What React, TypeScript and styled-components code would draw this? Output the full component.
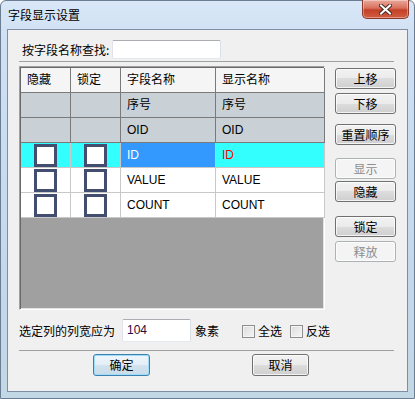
import React from "react";
import styled, { createGlobalStyle } from "styled-components";

const GlobalStyle = createGlobalStyle`
  html, body {
    margin: 0;
    padding: 0;
    background: #ffffff;
  }
  body {
    font-family: "Liberation Sans", "Noto Sans CJK SC", sans-serif;
    font-size: 12px;
    color: #000;
  }
`;

const Window = styled.div`
  width: 415px;
  height: 399px;
  box-sizing: border-box;
  display: flex;
  flex-direction: column;
  border: 1px solid #6a7d92;
  border-radius: 6px 6px 0 0;
  background: linear-gradient(to bottom, #d9e7f7 0%, #cfe0f3 40px, #c4d7ec 70%, #c2d8e4 100%);
`;

const TitleBar = styled.div`
  height: 28px;
  display: flex;
  align-items: flex-start;
  padding-left: 7px;
`;

const TitleText = styled.span`
  margin-top: 7px;
  font-family: "Noto Sans CJK SC", sans-serif;
  font-size: 12px;
  line-height: 14px;
`;

const CloseButton = styled.div`
  margin-left: auto;
  margin-right: 5px;
  margin-top: -1px;
  width: 47px;
  height: 19px;
  box-sizing: border-box;
  display: flex;
  align-items: center;
  justify-content: center;
  border: 1px solid #8a3a2c;
  border-top: none;
  border-radius: 0 0 5px 5px;
  background: linear-gradient(to bottom, #e9a99b 0%, #d9705c 45%, #c3402a 55%, #d25e40 100%);
  box-shadow: inset 0 0 0 1px rgba(255, 255, 255, 0.35);
`;

const Client = styled.div`
  flex: 1;
  margin: 0 6px 6px 6px;
  border: 1px solid #7f8fa3;
  background: #f0f0f0;
  padding: 10px 13px 0 11px;
  display: flex;
  flex-direction: column;
`;

const SearchRow = styled.div`
  height: 19px;
  display: flex;
  align-items: center;
  padding-left: 3px;
`;

const Label = styled.span<{ $gap?: number }>`
  margin-left: ${(p) => p.$gap ?? 0}px;
  font-family: "Noto Sans CJK SC", sans-serif;
  font-size: 12px;
  line-height: 14px;
  white-space: nowrap;
`;

const TextBox = styled.div<{ $w: number; $h: number; $gap: number }>`
  width: ${(p) => p.$w}px;
  height: ${(p) => p.$h}px;
  margin-left: ${(p) => p.$gap}px;
  box-sizing: border-box;
  border: 1px solid;
  border-color: #abadb3 #dbdfe6 #e3e9ef #e2e3ea;
  border-radius: 2px;
  background: #ffffff;
  padding: 3px 0 0 4px;
  font-family: "Liberation Sans", sans-serif;
  font-size: 12px;
  line-height: 14px;
  color: #2a0a40;
`;

const Separator = styled.div<{ $top: number }>`
  height: 1px;
  margin-top: ${(p) => p.$top}px;
  background: #a0a0a0;
`;

const MainRow = styled.div`
  margin-top: 4px;
  display: flex;
  align-items: flex-start;
`;

const Grid = styled.div`
  width: 306px;
  height: 244px;
  box-sizing: border-box;
  border: 1px solid;
  border-color: #a0a0a0 #ffffff #ffffff #a0a0a0;
  box-shadow: inset 1px 1px 0 #696969, inset -1px -1px 0 #e3e3e3;
  padding: 1px;
  background: #a0a0a0;
  display: grid;
  grid-template-columns: 50px 50px 95px 109px;
  grid-auto-rows: 25px;
  align-content: start;
`;

const Cell = styled.div<{ $bg: string; $line: string; $color?: string }>`
  box-sizing: border-box;
  background: ${(p) => p.$bg};
  border-right: 1px solid ${(p) => p.$line};
  border-bottom: 1px solid ${(p) => p.$line};
  padding-left: 6px;
  display: flex;
  align-items: center;
  color: ${(p) => p.$color ?? "#000"};
  font-family: "Liberation Sans", "Noto Sans CJK SC", sans-serif;
  font-size: 12px;
  line-height: 14px;
  white-space: nowrap;
  overflow: hidden;
`;

const CheckCell = styled(Cell)`
  padding-left: 0;
  justify-content: center;
`;

const CheckGlyph = styled.span`
  width: 23px;
  height: 23px;
  box-sizing: border-box;
  border: 3px solid #434d6f;
  background: #ffffff;
`;

const ButtonColumn = styled.div`
  margin-left: 10px;
  padding-top: 2px;
  display: flex;
  flex-direction: column;
`;

const Button = styled.button<{ $top?: number; $w?: number; $focused?: boolean }>`
  width: ${(p) => p.$w ?? 61}px;
  height: ${(p) => (p.$w ? 22 : 21)}px;
  margin-top: ${(p) => p.$top ?? 0}px;
  padding: 0;
  box-sizing: border-box;
  border: 1px solid ${(p) => (p.disabled ? "#adb2b5" : p.$focused ? "#3c7fb1" : "#707070")};
  border-radius: 3px;
  background: ${(p) =>
    p.disabled
      ? "#f4f4f4"
      : p.$focused
      ? "linear-gradient(to bottom, #eef6fb 0%, #e3eef6 50%, #d3e3ef 50%, #c8dbe9 100%)"
      : "linear-gradient(to bottom, #f2f2f2 0%, #ebebeb 50%, #dddddd 50%, #cfcfcf 100%)"};
  box-shadow: inset 0 0 0 1px ${(p) => (p.$focused ? "#9fdcf7" : "rgba(255, 255, 255, 0.75)")};
  color: ${(p) => (p.disabled ? "#8d8d8d" : "#000")};
  font-family: "Noto Sans CJK SC", sans-serif;
  font-size: 12px;
  line-height: 14px;
`;

const BottomRow = styled.div`
  margin-top: 9px;
  height: 23px;
  display: flex;
  align-items: center;
`;

const CheckBox = styled.span<{ $gap: number }>`
  width: 13px;
  height: 13px;
  margin-left: ${(p) => p.$gap}px;
  box-sizing: border-box;
  border: 1px solid #8e8f8f;
  background: linear-gradient(135deg, #dcdcdc 0%, #f5f5f5 100%);
  box-shadow: inset 0 0 0 1px #f4f4f4;
  margin-top: 1px;
`;

const ActionRow = styled.div`
  margin-top: 3px;
  padding-left: 74px;
  display: flex;
  gap: 102px;
`;

type Row = {
  kind: "head" | "fixed" | "data";
  name: string;
  display: string;
  selected?: boolean;
};

const rows: Row[] = [
  { kind: "head", name: "字段名称", display: "显示名称" },
  { kind: "fixed", name: "序号", display: "序号" },
  { kind: "fixed", name: "OID", display: "OID" },
  { kind: "data", name: "ID", display: "ID", selected: true },
  { kind: "data", name: "VALUE", display: "VALUE" },
  { kind: "data", name: "COUNT", display: "COUNT" },
];

const CloseIcon = () => (
  <svg width="13" height="11" viewBox="0 0 13 11">
    <path d="M2 1.5 L11 9.5 M11 1.5 L2 9.5" stroke="#4a2a24" strokeWidth="4" strokeLinecap="square" fill="none" />
    <path d="M2 1.5 L11 9.5 M11 1.5 L2 9.5" stroke="#ffffff" strokeWidth="2" strokeLinecap="square" fill="none" />
  </svg>
);

function FieldGrid() {
  return (
    <Grid>
      {rows.map((row, i) => {
        if (row.kind === "head") {
          return (
            <React.Fragment key={i}>
              <Cell $bg="#f5f5f5" $line="#7a7a7a">隐藏</Cell>
              <Cell $bg="#f5f5f5" $line="#7a7a7a">锁定</Cell>
              <Cell $bg="#f5f5f5" $line="#7a7a7a">{row.name}</Cell>
              <Cell $bg="#f5f5f5" $line="#7a7a7a">{row.display}</Cell>
            </React.Fragment>
          );
        }
        if (row.kind === "fixed") {
          return (
            <React.Fragment key={i}>
              <Cell $bg="#c9d0d6" $line="#7a7a7a" />
              <Cell $bg="#c9d0d6" $line="#7a7a7a" />
              <Cell $bg="#c9d0d6" $line="#7a7a7a">{row.name}</Cell>
              <Cell $bg="#c9d0d6" $line="#7a7a7a">{row.display}</Cell>
            </React.Fragment>
          );
        }
        const bg = row.selected ? "#33ffff" : "#ffffff";
        return (
          <React.Fragment key={i}>
            <CheckCell $bg={bg} $line="#c8c8c8">
              <CheckGlyph />
            </CheckCell>
            <CheckCell $bg={bg} $line="#c8c8c8">
              <CheckGlyph />
            </CheckCell>
            <Cell
              $bg={row.selected ? "#3399ff" : "#ffffff"}
              $line="#c8c8c8"
              $color={row.selected ? "#ffffff" : "#000"}
            >
              {row.name}
            </Cell>
            <Cell $bg={bg} $line="#c8c8c8" $color={row.selected ? "#ff0000" : "#000"}>
              {row.display}
            </Cell>
          </React.Fragment>
        );
      })}
    </Grid>
  );
}

export default function App() {
  return (
    <>
      <GlobalStyle />
      <Window>
        <TitleBar>
          <TitleText>字段显示设置</TitleText>
          <CloseButton>
            <CloseIcon />
          </CloseButton>
        </TitleBar>
        <Client>
          <SearchRow>
            <Label>按字段名称查找:</Label>
            <TextBox $w={109} $h={19} $gap={3} />
          </SearchRow>
          <Separator $top={2} />
          <MainRow>
            <FieldGrid />
            <ButtonColumn>
              <Button>上移</Button>
              <Button $top={4}>下移</Button>
              <Button $top={10}>重置顺序</Button>
              <Button $top={13} disabled>
                显示
              </Button>
              <Button $top={2}>隐藏</Button>
              <Button $top={14}>锁定</Button>
              <Button $top={4} disabled>
                释放
              </Button>
            </ButtonColumn>
          </MainRow>
          <BottomRow>
            <Label>选定列的列宽应为</Label>
            <TextBox $w={69} $h={23} $gap={7}>
              104
            </TextBox>
            <Label $gap={4}>象素</Label>
            <CheckBox $gap={23} />
            <Label $gap={3}>全选</Label>
            <CheckBox $gap={8} />
            <Label $gap={3}>反选</Label>
          </BottomRow>
          <Separator $top={8} />
          <ActionRow>
            <Button $w={57} $focused>
              确定
            </Button>
            <Button $w={57}>取消</Button>
          </ActionRow>
        </Client>
      </Window>
    </>
  );
}
